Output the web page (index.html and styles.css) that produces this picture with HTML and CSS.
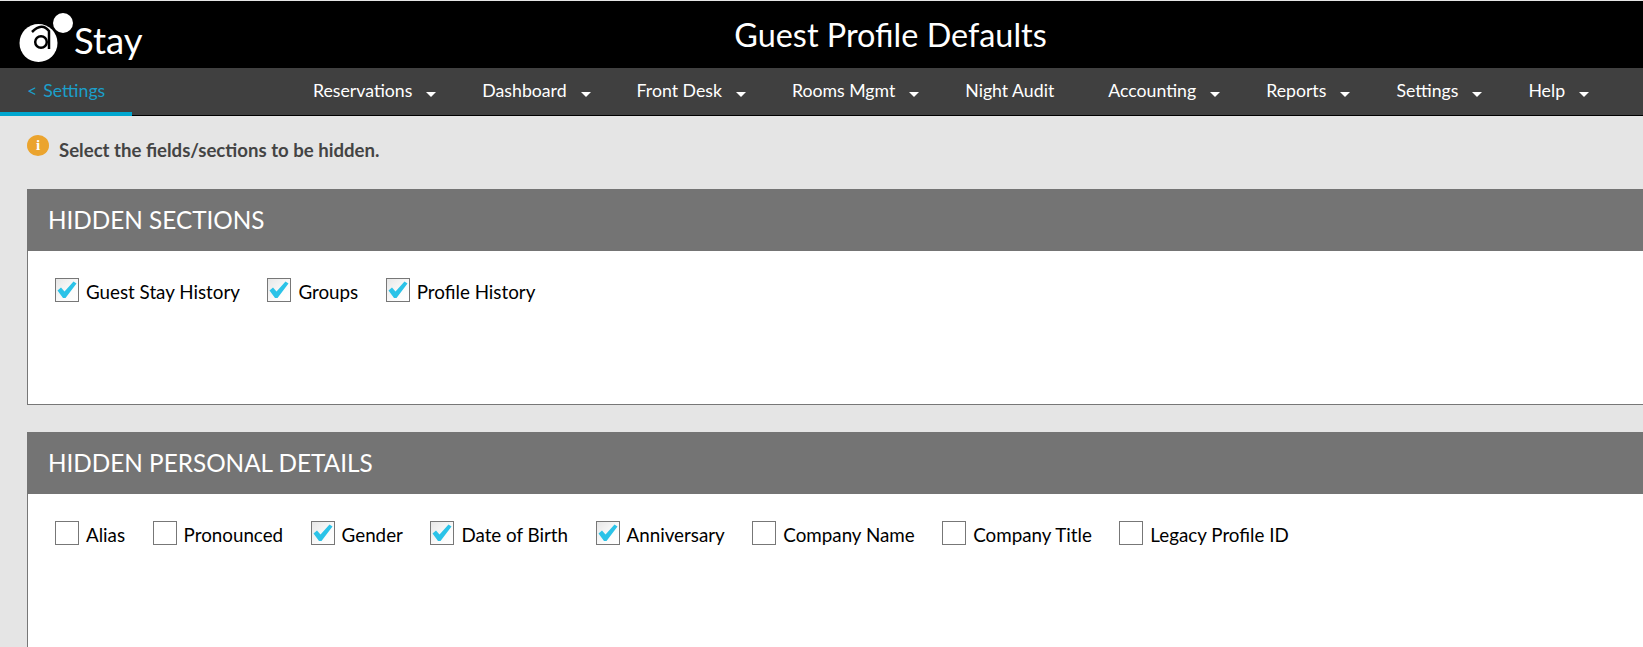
FILE: index.html
```html
<!DOCTYPE html>
<html lang="en">
<head>
<meta charset="utf-8">
<title>Guest Profile Defaults</title>
<link rel="stylesheet" href="styles.css">
</head>
<body>
<svg class="defs" width="0" height="0" aria-hidden="true">
  <defs>
    <linearGradient id="boxfill" x1="0" y1="0" x2="1" y2="1">
      <stop offset="0" stop-color="#e6e6e6"/>
      <stop offset="0.6" stop-color="#fbfbfb"/>
      <stop offset="1" stop-color="#fff"/>
    </linearGradient>
    <symbol id="checked" viewBox="0 0 24 24">
      <rect x="0.5" y="0.5" width="23" height="23" fill="url(#boxfill)" stroke="#777"/>
      <polygon points="2.5,12.5 6,9.5 9.5,13.5 18.5,3.5 21.5,5.5 10.5,20 8,20" fill="#2bc3e8"/>
    </symbol>
    <symbol id="empty" viewBox="0 0 24 24">
      <rect x="0.5" y="0.5" width="23" height="23" fill="#fff" stroke="#777"/>
    </symbol>
  </defs>
</svg>
<header class="topbar">
  <div class="brand">
    <svg class="mark" viewBox="0 0 60 56" width="60" height="56" aria-hidden="true">
      <circle cx="20.5" cy="32" r="19" fill="#fff"/>
      <circle cx="45" cy="12" r="10" fill="#fff"/>
      <circle cx="23" cy="31" r="5.8" fill="none" stroke="#000" stroke-width="2.5"/>
      <path d="M14 21 Q24 11 31 20 L31 38" fill="none" stroke="#000" stroke-width="2.5"/>
    </svg>
    <span class="brand-name">Stay</span>
  </div>
  <h1 class="title">Guest Profile Defaults</h1>
</header>
<nav class="navbar">
  <a class="back"><span class="back-arrow">&lt;</span>Settings</a>
  <ul class="menu">
    <li class="menu-item has-caret">Reservations</li>
    <li class="menu-item has-caret">Dashboard</li>
    <li class="menu-item has-caret">Front Desk</li>
    <li class="menu-item has-caret">Rooms Mgmt</li>
    <li class="menu-item menu-item-plain">Night Audit</li>
    <li class="menu-item has-caret">Accounting</li>
    <li class="menu-item has-caret">Reports</li>
    <li class="menu-item has-caret">Settings</li>
    <li class="menu-item has-caret">Help</li>
  </ul>
</nav>
<main class="content">
  <p class="notice"><span class="info">i</span>Select the fields/sections to be hidden.</p>

  <section class="panel">
    <h2 class="panel-head">HIDDEN SECTIONS</h2>
    <div class="panel-body">
      <label class="check"><svg class="box"><use href="#checked"/></svg>Guest Stay History</label>
      <label class="check"><svg class="box"><use href="#checked"/></svg>Groups</label>
      <label class="check"><svg class="box"><use href="#checked"/></svg>Profile History</label>
    </div>
  </section>

  <section class="panel">
    <h2 class="panel-head">HIDDEN PERSONAL DETAILS</h2>
    <div class="panel-body">
      <label class="check"><svg class="box"><use href="#empty"/></svg>Alias</label>
      <label class="check"><svg class="box"><use href="#empty"/></svg>Pronounced</label>
      <label class="check"><svg class="box"><use href="#checked"/></svg>Gender</label>
      <label class="check"><svg class="box"><use href="#checked"/></svg>Date of Birth</label>
      <label class="check"><svg class="box"><use href="#checked"/></svg>Anniversary</label>
      <label class="check"><svg class="box"><use href="#empty"/></svg>Company Name</label>
      <label class="check"><svg class="box"><use href="#empty"/></svg>Company Title</label>
      <label class="check"><svg class="box"><use href="#empty"/></svg>Legacy Profile ID</label>
    </div>
  </section>
</main>
</body>
</html>
```
FILE: styles.css
```css
* { box-sizing: border-box; }
html, body { margin: 0; height: 100%; overflow: hidden; }
body {
  background: #e5e5e5;
  font-family: Lato, "Open Sans", sans-serif;
  color: #000;
}
.defs { display: block; height: 0; }
.topbar {
  height: 67px;
  margin-top: 1px;
  background: #000;
  color: #fff;
  display: flex;
  align-items: flex-start;
}
.brand {
  width: 146px;
  flex: none;
  display: flex;
  align-items: flex-start;
  padding-left: 18px;
}
.mark { display: block; flex: none; margin-top: 10px; }
.brand-name {
  font-size: 36.5px;
  line-height: 42px;
  margin: 18px 0 0 -4px;
}
.title {
  margin: 0;
  flex: 1;
  font-size: 32.4px;
  font-weight: 400;
  line-height: 68px;
  text-align: center;
  padding-right: 8px;
}
.navbar {
  height: 48px;
  background: #404040;
  border-bottom: 1px solid #000;
  display: flex;
  align-items: stretch;
}
.back {
  width: 132px;
  flex: none;
  border-bottom: 4px solid #00a7d0;
  margin-bottom: -1px;
  color: #1b9fca;
  font-size: 17.7px;
  line-height: 46px;
  padding-left: 27px;
}
.back-arrow { margin-right: 6px; }
.menu {
  list-style: none;
  margin: 0;
  padding: 0 0 0 181px;
  display: flex;
  gap: 46px;
  color: #fff;
  font-size: 17.7px;
  line-height: 46px;
}
.menu-item { white-space: nowrap; }
.menu-item-plain { margin-right: 8px; }
.has-caret::after {
  content: "";
  display: inline-block;
  margin-left: 14px;
  border-left: 5px solid transparent;
  border-right: 5px solid transparent;
  border-top: 5px solid #fff;
}
.content { padding-left: 27px; }
.notice {
  margin: 0;
  height: 73px;
  padding-top: 23px;
  display: flex;
  align-items: flex-start;
  font-size: 18.6px;
  font-weight: 700;
  color: #444;
  line-height: 22px;
}
.info {
  width: 22px;
  height: 21px;
  flex: none;
  border-radius: 50%;
  background: #eba42e;
  color: #fff;
  font: 700 15px/21px "Liberation Serif", serif;
  text-align: center;
  margin: -4px 10px 0 0;
}
.panel {
  height: 216px;
  margin: 0 -2px 27px 0;
  border: 1px solid #777;
  background: #fff;
}
.panel-head {
  margin: -1px -1px 0;
  height: 62px;
  background: #747474;
  color: #fff;
  font-size: 24.3px;
  font-weight: 400;
  line-height: 62px;
  padding-left: 21px;
}
.panel-body {
  display: flex;
  align-items: flex-start;
  padding: 27px 0 0 27px;
  gap: 27.5px;
}
.check {
  display: flex;
  align-items: flex-start;
  gap: 7px;
  font-size: 18.8px;
  line-height: 28px;
  white-space: nowrap;
}
.box { width: 24px; height: 24px; flex: none; display: block; }
```
